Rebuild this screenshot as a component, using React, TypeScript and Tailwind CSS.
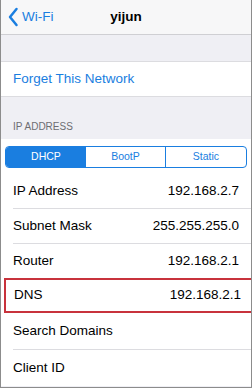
import React from 'react';

const BLUE = 'text-[#1a7ee0]';

const Row: React.FC<{ label: string; value?: string; sep?: boolean; tall?: boolean }> = ({
  label,
  value,
  sep = true,
  tall,
}) => (
  <div>
    <div className={`flex items-center justify-between pl-3 pr-3 ${tall ? 'h-[36px]' : 'h-[34px]'}`}>
      <span className="text-[13.5px] text-black">{label}</span>
      {value && <span className="text-[13.5px] text-black">{value}</span>}
    </div>
    {sep && <div className="ml-3 h-px bg-[#dcdce0]" />}
  </div>
);

export default function App() {
  return (
    <div
      className="w-[252px] h-[388px] overflow-hidden border-x border-b border-[#8c8c8c] bg-[#efeff4]"
      style={{ fontFamily: '"Liberation Sans", Arial, sans-serif' }}
    >
      {/* Nav bar */}
      <div className="relative flex h-[35px] items-center border-b border-[#cfcfd3] bg-[#f7f7f8]">
        <div className={`flex items-center pl-[7px] ${BLUE}`}>
          <svg width="11" height="20" viewBox="0 0 11 20" fill="none">
            <path d="M8.5 2 L2 10 L8.5 18" stroke="currentColor" strokeWidth="2.5" strokeLinecap="round" strokeLinejoin="round" />
          </svg>
          <span className="ml-[3px] text-[13.5px]">Wi-Fi</span>
        </div>
        <span className="absolute left-1/2 -translate-x-1/2 text-[13.5px] font-bold text-black">yijun</span>
      </div>

      <div className="h-[26px]" />

      {/* Forget */}
      <div className="flex h-[36px] items-center border-y border-[#dcdce0] bg-white pl-3">
        <span className={`text-[13.5px] ${BLUE}`}>Forget This Network</span>
      </div>

      <div className="flex h-[42px] items-end pb-[5px] pl-3">
        <span className="text-[10px] text-[#6d6d72]">IP ADDRESS</span>
      </div>

      <div className="bg-white">
        <div className="px-[4px] pt-[7px] pb-[6px]">
          <div className="grid h-[22px] grid-cols-3 overflow-hidden rounded-[4px] border border-[#1a7ee0] text-[10.5px]">
            <div className="flex items-center justify-center bg-[#1a7ee0] text-white">DHCP</div>
            <div className={`flex items-center justify-center border-r border-[#1a7ee0] ${BLUE}`}>BootP</div>
            <div className={`flex items-center justify-center ${BLUE}`}>Static</div>
          </div>
        </div>
        <Row label="IP Address" value="192.168.2.7" />
        <Row label="Subnet Mask" value="255.255.255.0" />
        <Row label="Router" value="192.168.2.1" sep={false} />
        <div className="ml-[3px] flex h-[35px] items-center justify-between border-2 border-r-0 border-[#c8323c] pl-[8px] pr-[10px]">
          <span className="text-[13.5px] text-black">DNS</span>
          <span className="text-[13.5px] text-black">192.168.2.1</span>
        </div>
        <Row label="Search Domains" tall />
        <Row label="Client ID" tall sep={false} />
      </div>
    </div>
  );
}
